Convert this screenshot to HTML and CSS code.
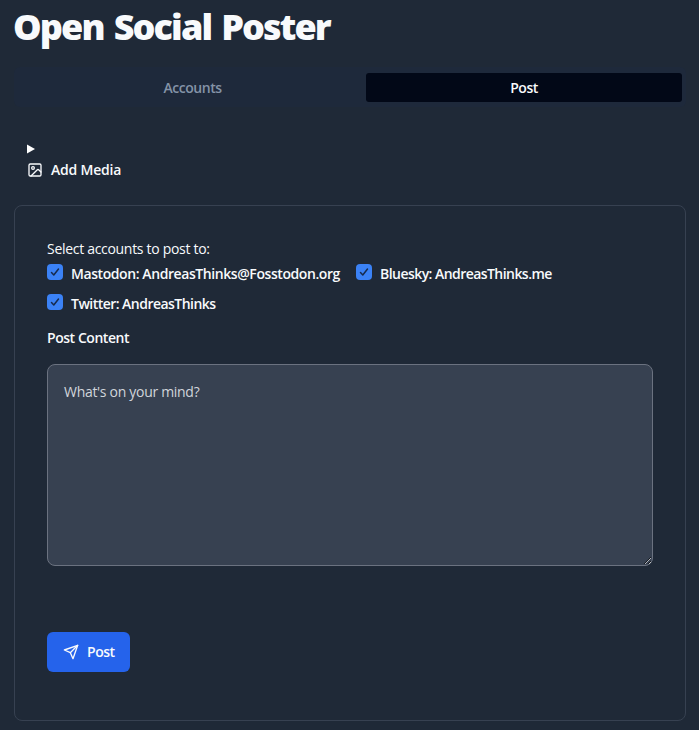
FILE: index.html
```html
<!DOCTYPE html>
<html lang="en">
<head>
<meta charset="utf-8">
<title>Open Social Poster</title>
<link rel="stylesheet" href="styles.css">
</head>
<body>
<main class="page">
  <h1 class="title">Open Social Poster</h1>
  <div class="tabs" role="tablist">
    <button class="tab" role="tab"><span class="t-accounts">Accounts</span></button>
    <button class="tab active" role="tab"><span class="t-post">Post</span></button>
  </div>
  <section class="media">
    <svg class="marker" width="8" height="10" viewBox="0 0 8 10"><path d="M0 .5 8 5 0 9.500z" fill="#fff"/></svg>
    <button class="add-media">
      <svg width="16" height="16" viewBox="0 0 24 24" fill="none" stroke="currentColor" stroke-width="2" stroke-linecap="round" stroke-linejoin="round"><rect x="3" y="3" width="18" height="18" rx="2"/><circle cx="9" cy="9" r="2"/><path d="m21 15-3.086-3.086a2 2 0 0 0-2.828 0L6 21"/></svg>
      <span class="t-media">Add Media</span>
    </button>
  </section>
  <section class="card">
    <p class="prompt">Select accounts to post to:</p>
    <div class="accounts">
      <label class="account mastodon"><span class="check"><svg width="16" height="16" viewBox="0 0 16 16"><path d="m4.500 8.500 2.300 2.500 4.700-6"/></svg></span><span class="t-mastodon">Mastodon: AndreasThinks@Fosstodon.org</span></label>
      <label class="account"><span class="check"><svg width="16" height="16" viewBox="0 0 16 16"><path d="m4.500 8.500 2.300 2.500 4.700-6"/></svg></span><span class="t-bluesky">Bluesky: AndreasThinks.me</span></label>
      <label class="account"><span class="check"><svg width="16" height="16" viewBox="0 0 16 16"><path d="m4.500 8.500 2.300 2.500 4.700-6"/></svg></span><span class="t-twitter">Twitter: AndreasThinks</span></label>
    </div>
    <label class="content-label" for="content">Post Content</label>
    <textarea id="content" class="content" placeholder="What's on your mind?"></textarea>
    <button class="submit">
      <svg width="16" height="16" viewBox="0 0 24 24" fill="none" stroke="currentColor" stroke-width="2" stroke-linecap="round" stroke-linejoin="round"><path d="m22 2-7 20-4-9-9-4Z"/><path d="M22 2 11 13"/></svg>
      <span class="t-post">Post</span>
    </button>
  </section>
</main>
</body>
</html>
```
FILE: styles.css
```css
* { box-sizing: border-box; }
body {
  margin: 0;
  background: #1f2937;
  color: #f8fafc;
  font: 600 14px/20px "Open Sans", "Noto Sans", sans-serif;
  letter-spacing: -0.3px;
}
button { font: inherit; letter-spacing: inherit; color: inherit; border: 0; background: none; padding: 0; }
span { white-space: nowrap; }
.page { height: 730px; padding: 7px 13px 0 14px; overflow: hidden; }
.title { margin: 0 0 0 -1px; font-size: 36px; line-height: 40px; font-weight: 800; letter-spacing: -1.9px; word-spacing: 2.6px; white-space: nowrap; }
.tabs { display: flex; height: 40px; margin-top: 20px; padding: 5px 4px 5px 5px; border-radius: 6px; background: #1e293b; }
.tab { flex: 0 0 347px; height: 30px; padding-top: 2px; border-radius: 3px; color: #8493a7; }
.tab.active { flex: 1; height: 29px; margin-top: 1px; padding-top: 0; background: #020817; color: #f8fafc; }
.t-accounts, .t-post { letter-spacing: -0.45px; }
.t-media { letter-spacing: -0.2px; }
.t-mastodon { letter-spacing: -0.42px; }
.t-bluesky { letter-spacing: -0.55px; }
.t-twitter { letter-spacing: -0.53px; }
.media { padding: 37px 13px 0; }
.marker { display: block; }
.add-media { display: flex; align-items: center; gap: 8px; margin-top: 6px; }
.card { height: 516px; margin-top: 25px; padding: 33px 32px 0; border: 1px solid #374151; border-radius: 8px; }
.prompt { margin: 0; font-weight: 400; }
.accounts { display: flex; flex-wrap: wrap; gap: 10px 16px; margin-top: 5px; }
.account { display: flex; gap: 8px; height: 20px; }
.check { width: 16px; height: 16px; border-radius: 4px; background: #3b82f6; }
.check svg { display: block; fill: none; stroke: #172b4d; stroke-width: 1.5; stroke-linecap: round; stroke-linejoin: round; }
.mastodon { width: 293px; }
.content-label { display: block; margin-top: 14px; letter-spacing: -0.45px; }
.content {
  display: block;
  width: 606px;
  height: 202px;
  margin: 16px 0 0;
  padding: 17px 16px;
  border: 1px solid #6b7280;
  border-radius: 8px;
  background: #374151;
  color: #f8fafc;
  font: 400 14px/20px "Open Sans", "Noto Sans", sans-serif;
  letter-spacing: -0.3px;
  resize: vertical;
}
.content::placeholder { color: #d1d5db; }
.submit { display: flex; align-items: center; gap: 8px; width: 83px; height: 40px; margin-top: 66px; padding-left: 16px; border-radius: 6px; background: #2563eb; }
```
